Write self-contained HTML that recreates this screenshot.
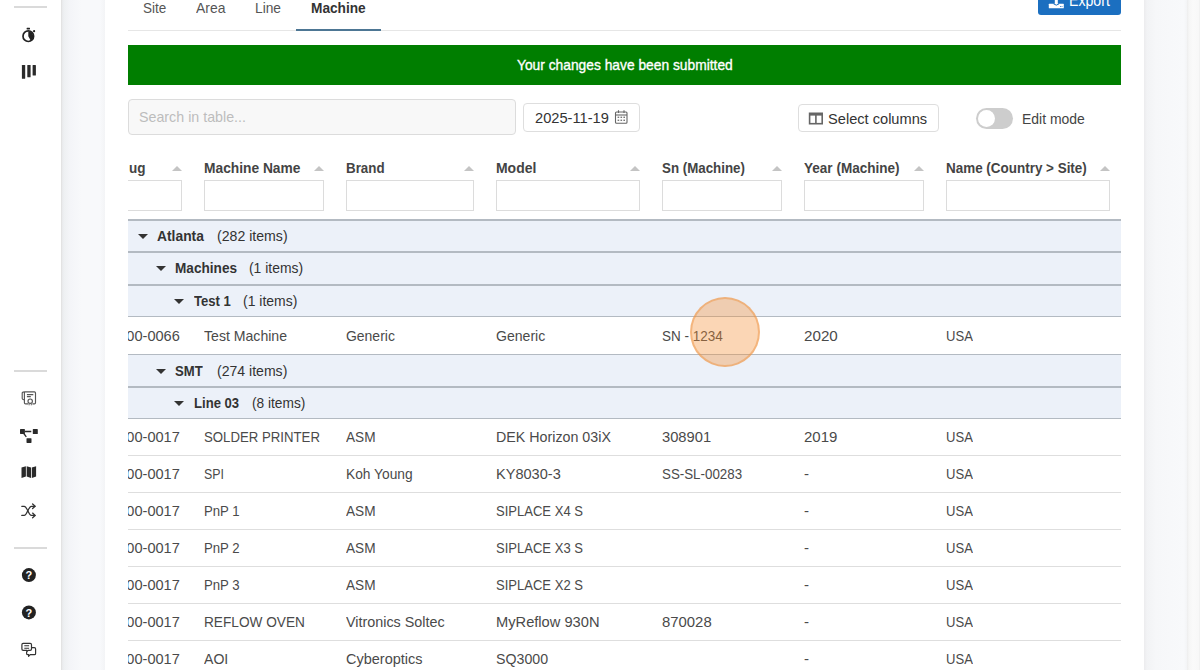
<!DOCTYPE html>
<html><head><meta charset="utf-8">
<style>
*{box-sizing:border-box;margin:0;padding:0}
html,body{-webkit-font-smoothing:antialiased;width:1200px;height:670px;overflow:hidden;background:#fff;font-family:"Liberation Sans",sans-serif;position:relative}
.abs{position:absolute}
#sidebar{left:0;top:0;width:62px;height:670px;background:#fff;border-right:1px solid #e3e3e3}
#gapL{left:62px;top:0;width:43px;height:670px;background:linear-gradient(to right,#e8e9eb 0,#eef0f2 2px,#f4f5f8 8px,#f8f9fb 20px,#f8f9fb 38px,#f3f4f6 43px)}
#card{left:105px;top:0;width:1039px;height:670px;background:#fff}
#gapR{left:1144px;top:0;width:43px;height:670px;background:linear-gradient(to right,#ececee 0,#f2f3f5 3px,#f6f7f9 12px,#f8f9fb 40px,#f3f4f6 43px)}
#edgeR{left:1187px;top:0;width:13px;height:670px;background:linear-gradient(to right,#ededed 0,#f6f6f6 2px,#fafafa 6px,#f8f8f8 12px,#ececec 13px)}
.sep{left:14px;width:33px;height:2px;background:#dadada}
.t{position:absolute;white-space:nowrap;line-height:1;transform-origin:0 0}
.tab{font-size:15px;color:#555;top:0}
.hdr{font-size:14px;font-weight:bold;color:#454545;top:160px}
.tri{position:absolute;top:166px;width:0;height:0;border-left:5px solid transparent;border-right:5px solid transparent;border-bottom:5px solid #c4c4c4}
.fin{position:absolute;top:180px;height:31px;border:1px solid #dcdcdc;background:#fff}
.grp{position:absolute;left:128px;width:993px;background:#ecf1f9}
.gb{position:absolute;left:128px;width:993px;height:2px;background:#b3bac2}
.rb{position:absolute;left:128px;width:993px;height:1px;background:#dedede}
.gt{font-size:14px;color:#333}
.gt b{font-weight:bold}
.ar{position:absolute;width:0;height:0;border-left:5px solid transparent;border-right:5px solid transparent;border-top:5px solid #333}
.d{font-size:14px;color:#4a4a4a}
</style></head><body>
<div id="sidebar" class="abs"></div>
<div id="gapL" class="abs"></div>
<div id="card" class="abs"></div>
<div id="gapR" class="abs"></div>
<div id="edgeR" class="abs"></div>

<!-- sidebar separators -->
<div class="abs sep" style="top:6px"></div>
<div class="abs sep" style="top:370px"></div>
<div class="abs sep" style="top:547px"></div>


<!-- sidebar icons -->
<svg class="abs" style="left:0;top:0" width="61" height="670" viewBox="0 0 61 670">
 <g fill="#222" stroke="none">
  <!-- stopwatch -->
  <rect x="26.6" y="27.8" width="3.4" height="1.6" rx="0.4"/>
  <circle cx="34.1" cy="31.2" r="1.1"/>
  <path d="M28.3 36.2 L28.3 31.4 A4.8 4.8 0 0 1 30.7 40.4 Z"/>
 </g>
 <circle cx="28.3" cy="36.2" r="5.3" fill="none" stroke="#222" stroke-width="1.7"/>
 <!-- bars -->
 <g fill="#2a2a2a">
  <rect x="21.9" y="65" width="3.3" height="13.7" rx="0.5"/>
  <rect x="27.3" y="65" width="3.3" height="12.3" rx="0.5"/>
  <rect x="32.6" y="65" width="3.3" height="10.6" rx="0.5"/>
 </g>
 <!-- certificate -->
 <g fill="none" stroke="#555" stroke-width="1.15" stroke-linejoin="round">
  <path d="M24.4 391.8 H34.4 Q35.5 391.8 35.5 392.9 V402.7 Q35.5 403.9 34.4 403.9 H32.4"/>
  <path d="M28.1 403.9 H25.6 Q24.4 403.9 24.4 402.7 V391.8"/>
  <path d="M24.4 391.8 Q22.2 391.8 22.2 393.2 V398.6 Q22.2 399.8 24.4 399.8"/>
  <circle cx="30.2" cy="401.2" r="2.2"/>
 </g>
 <path d="M26.9 394.6 H33.3 M26.9 396.6 H30.8" stroke="#555" stroke-width="1.1"/>
 <path d="M29.1 403.3 V405.3 M31.3 403.3 V405.3" stroke="#666" stroke-width="1"/>
 <!-- sitemap -->
 <g fill="#2a2a2a">
  <rect x="20" y="429" width="4.9" height="4.9" rx="0.6"/>
  <rect x="32.8" y="429.1" width="5" height="4.9" rx="0.6"/>
  <rect x="26.5" y="438.2" width="5" height="4.7" rx="0.6"/>
 </g>
 <path d="M24.8 431.5 H31.3 M23.8 433.5 L26.3 436.9" stroke="#2a2a2a" stroke-width="1.3"/>
 <!-- map -->
 <g fill="#2a2a2a">
  <path d="M21.5 467.6 L25.9 466.3 V476.6 L21.5 477.9 Z"/>
  <path d="M26.7 466.3 L31 467.6 V477.9 L26.7 476.6 Z"/>
  <path d="M31.8 467.6 L36.1 466.3 V476.6 L31.8 477.9 Z"/>
 </g>
 <!-- shuffle -->
 <g fill="none" stroke="#333" stroke-width="1.3" stroke-linecap="round" stroke-linejoin="round">
  <path d="M21.8 506.3 H24.2 C27.3 506.3 28.3 515.4 31.4 515.4 H35"/>
  <path d="M21.8 515.4 H24.2 C27.3 515.4 28.3 506.3 31.4 506.3 H35"/>
  <path d="M32.6 504 L35.1 506.3 L32.6 508.6"/>
  <path d="M32.6 513.1 L35.1 515.4 L32.6 517.7"/>
 </g>
 <!-- question circles -->
 <g>
  <circle cx="28.9" cy="575.1" r="7" fill="#222"/>
  <text x="28.9" y="579.4" font-family="Liberation Sans" font-weight="bold" font-size="11" fill="#fff" text-anchor="middle">?</text>
  <circle cx="28.9" cy="612.4" r="7" fill="#222"/>
  <text x="28.9" y="616.7" font-family="Liberation Sans" font-weight="bold" font-size="11" fill="#fff" text-anchor="middle">?</text>
 </g>
 <!-- comments -->
 <g fill="none" stroke="#333" stroke-width="1.2" stroke-linejoin="round">
  <path d="M23.1 643.4 H30.2 Q31.5 643.4 31.5 644.7 V649.1 Q31.5 650.4 30.2 650.4 H28.2 L26.9 651.6 V650.4 H23.1 Q21.9 650.4 21.9 649.1 V644.7 Q21.9 643.4 23.1 643.4 Z"/>
  <path d="M31.9 647.6 H34.4 Q35.6 647.6 35.6 648.9 V653.4 Q35.6 654.7 34.4 654.7 H30.2 L28.6 656.3 V654.7 H27.9 Q26.6 654.7 26.6 653.4 V651.4"/>
 </g>
 <path d="M24.3 645.8 H29.1 M24.3 648.3 H29.1" stroke="#333" stroke-width="1.1"/>
</svg>


<div class="t" style="left:142.60px;top:0px;font-size:15px;color:#555;transform:scaleX(0.9000);">Site</div>
<div class="t" style="left:195.80px;top:0px;font-size:15px;color:#555;transform:scaleX(0.9281);">Area</div>
<div class="t" style="left:255.30px;top:0px;font-size:15px;color:#555;transform:scaleX(0.9179);">Line</div>
<div class="t" style="left:311.00px;top:0px;font-size:15px;color:#333;font-weight:bold;transform:scaleX(0.9117);">Machine</div>
<div class="abs" style="left:128px;top:30px;width:993px;height:1px;background:#e6e6e6"></div>
<div class="abs" style="left:296px;top:29px;width:85px;height:2px;background:#4d7694"></div>
<div class="abs" style="left:1038px;top:-10px;width:83px;height:25px;background:#1b6fc0;border-radius:3px"></div>
<div class="t" style="left:1068.50px;top:-7px;font-size:16px;color:#fff;transform:scaleX(0.8830);">Export</div>
<svg class="abs" style="left:1046px;top:0" width="20" height="10" viewBox="0 0 20 10"><g fill="#fff"><rect x="2.8" y="3.8" width="15" height="4.4" rx="0.5"/><rect x="8.8" y="0" width="3" height="5"/></g><path d="M7.5 3.8 Q10.3 6.5 13.1 3.8" stroke="#1b6fc0" stroke-width="1" fill="none"/><circle cx="14.5" cy="6.5" r="0.5" fill="#1b6fc0"/><circle cx="16" cy="6.5" r="0.5" fill="#1b6fc0"/></svg>
<div class="abs" style="left:128px;top:45px;width:993px;height:40px;background:#007e00"></div>
<div class="t" style="left:516.90px;top:57px;font-size:15px;color:#fff;transform:scaleX(0.9196);-webkit-text-stroke:0.35px #fff;">Your changes have been submitted</div>
<div class="abs" style="left:128px;top:99px;width:388px;height:36px;background:#f8f8f8;border:1px solid #dcdcdc;border-radius:4px"></div>
<div class="t" style="left:139.00px;top:109px;font-size:15px;color:#bdbdbd;transform:scaleX(0.9504);">Search in table...</div>
<div class="abs" style="left:523px;top:103px;width:117px;height:29px;background:#fff;border:1px solid #dedede;border-radius:4px"></div>
<div class="t" style="left:535.00px;top:110px;font-size:15px;color:#333;transform:scaleX(0.9763);">2025-11-19</div>
<svg class="abs" style="left:614px;top:109px" width="15" height="16" viewBox="0 0 15 16"><g fill="none" stroke="#666" stroke-width="1.1"><rect x="1.5" y="3" width="11.5" height="11.3" rx="1"/><path d="M1.5 6 H13"/><path d="M4.5 1.2 V4 M10 1.2 V4"/></g><g fill="#777"><rect x="3.6" y="7.6" width="1.6" height="1.4"/><rect x="6.5" y="7.6" width="1.6" height="1.4"/><rect x="9.4" y="7.6" width="1.6" height="1.4"/><rect x="3.6" y="10.6" width="1.6" height="1.4"/><rect x="6.5" y="10.6" width="1.6" height="1.4"/><rect x="9.4" y="10.6" width="1.6" height="1.4"/></g></svg>
<div class="abs" style="left:798px;top:104px;width:141px;height:28px;background:#fff;border:1px solid #dedede;border-radius:4px"></div>
<div class="t" style="left:828.00px;top:110.5px;font-size:15px;color:#333;transform:scaleX(0.9745);">Select columns</div>
<svg class="abs" style="left:808px;top:112px" width="16" height="13" viewBox="0 0 16 13"><rect x="1.6" y="1.3" width="12.6" height="10.4" fill="none" stroke="#666" stroke-width="1.6"/><rect x="1.6" y="1.3" width="12.6" height="2.3" fill="#666"/><path d="M7.9 1.3 V11.7" stroke="#666" stroke-width="1.6"/></svg>
<div class="abs" style="left:976px;top:108px;width:37px;height:21px;background:#cdcdcd;border-radius:11px"></div>
<div class="abs" style="left:978px;top:110px;width:17px;height:17px;background:#fff;border-radius:50%"></div>
<div class="t" style="left:1022.00px;top:110.5px;font-size:15px;color:#444;transform:scaleX(0.9309);">Edit mode</div>
<div class="abs" style="left:128px;top:150px;width:60px;height:70px;overflow:hidden">
<div class="t" style="left:0.50px;top:10px;font-size:15px;color:#444;font-weight:bold;transform:scaleX(0.9000);">ug</div>
<div class="fin" style="left:-30px;top:30px;width:84px"></div>
</div>
<div class="tri" style="left:172px"></div>
<div class="t" style="left:204.00px;top:160px;font-size:15px;color:#444;font-weight:bold;transform:scaleX(0.9181);">Machine Name</div>
<div class="fin" style="left:204px;width:120px"></div>
<div class="tri" style="left:314px"></div>
<div class="t" style="left:346.00px;top:160px;font-size:15px;color:#444;font-weight:bold;transform:scaleX(0.8907);">Brand</div>
<div class="fin" style="left:346px;width:128px"></div>
<div class="tri" style="left:464px"></div>
<div class="t" style="left:496.00px;top:160px;font-size:15px;color:#444;font-weight:bold;transform:scaleX(0.9302);">Model</div>
<div class="fin" style="left:496px;width:144px"></div>
<div class="tri" style="left:630px"></div>
<div class="t" style="left:662.00px;top:160px;font-size:15px;color:#444;font-weight:bold;transform:scaleX(0.8882);">Sn (Machine)</div>
<div class="fin" style="left:662px;width:120px"></div>
<div class="tri" style="left:772px"></div>
<div class="t" style="left:804.00px;top:160px;font-size:15px;color:#444;font-weight:bold;transform:scaleX(0.9028);">Year (Machine)</div>
<div class="fin" style="left:804px;width:120px"></div>
<div class="tri" style="left:914px"></div>
<div class="t" style="left:946.00px;top:160px;font-size:15px;color:#444;font-weight:bold;transform:scaleX(0.8962);">Name (Country &gt; Site)</div>
<div class="fin" style="left:946px;width:164px"></div>
<div class="tri" style="left:1100px"></div>
<div class="grp" style="top:219px;height:33px"></div>
<div class="grp" style="top:251px;height:34px"></div>
<div class="grp" style="top:284px;height:33px"></div>
<div class="grp" style="top:354px;height:33px"></div>
<div class="grp" style="top:386px;height:33px"></div>
<div class="gb" style="top:219px"></div>
<div class="gb" style="top:251px"></div>
<div class="gb" style="top:284px"></div>
<div class="gb" style="top:386px"></div>
<div class="gb" style="top:316px;height:1px"></div>
<div class="gb" style="top:354px;height:1px"></div>
<div class="gb" style="top:418px;height:1px"></div>
<div class="ar" style="left:137.6px;top:234px"></div>
<div class="t" style="left:157.00px;top:228.4px;font-size:15px;color:#333;font-weight:bold;transform:scaleX(0.9231);">Atlanta</div>
<div class="t" style="left:217.40px;top:228.4px;font-size:15px;color:#333;transform:scaleX(0.9413);">(282 items)</div>
<div class="ar" style="left:155.6px;top:266px"></div>
<div class="t" style="left:175.30px;top:260.4px;font-size:15px;color:#333;font-weight:bold;transform:scaleX(0.9074);">Machines</div>
<div class="t" style="left:249.00px;top:260.4px;font-size:15px;color:#333;transform:scaleX(0.9259);">(1 items)</div>
<div class="ar" style="left:173.6px;top:299px"></div>
<div class="t" style="left:193.60px;top:293.4px;font-size:15px;color:#333;font-weight:bold;transform:scaleX(0.8738);">Test 1</div>
<div class="t" style="left:242.70px;top:293.4px;font-size:15px;color:#333;transform:scaleX(0.9310);">(1 items)</div>
<div class="ar" style="left:155.6px;top:369px"></div>
<div class="t" style="left:175.30px;top:363.4px;font-size:15px;color:#333;font-weight:bold;transform:scaleX(0.8750);">SMT</div>
<div class="t" style="left:216.80px;top:363.4px;font-size:15px;color:#333;transform:scaleX(0.9373);">(274 items)</div>
<div class="ar" style="left:173.6px;top:401px"></div>
<div class="t" style="left:193.60px;top:395.4px;font-size:15px;color:#333;font-weight:bold;transform:scaleX(0.8731);">Line 03</div>
<div class="t" style="left:252.00px;top:395.4px;font-size:15px;color:#333;transform:scaleX(0.9138);">(8 items)</div>
<div class="abs" style="left:128px;top:321px;width:60px;height:24px;overflow:hidden">
<div class="t" style="left:-42.63px;top:7px;font-size:15px;color:#4a4a4a;transform:scaleX(0.9717);">M-00000-0066</div>
</div>
<div class="t" style="left:204.00px;top:328px;font-size:15px;color:#4a4a4a;transform:scaleX(0.9398);">Test Machine</div>
<div class="t" style="left:346.00px;top:328px;font-size:15px;color:#4a4a4a;transform:scaleX(0.9302);">Generic</div>
<div class="t" style="left:496.00px;top:328px;font-size:15px;color:#4a4a4a;transform:scaleX(0.9377);">Generic</div>
<div class="t" style="left:662.00px;top:328px;font-size:15px;color:#4a4a4a;transform:scaleX(0.9000);">SN - 1234</div>
<div class="t" style="left:804.00px;top:328px;font-size:15px;color:#4a4a4a;transform:scaleX(1.0121);">2020</div>
<div class="t" style="left:946.00px;top:328px;font-size:15px;color:#4a4a4a;transform:scaleX(0.8710);">USA</div>
<div class="rb" style="top:455px"></div>
<div class="abs" style="left:128px;top:422px;width:60px;height:24px;overflow:hidden">
<div class="t" style="left:-42.63px;top:6.600000000000023px;font-size:15px;color:#4a4a4a;transform:scaleX(0.9717);">M-00000-0017</div>
</div>
<div class="t" style="left:204.00px;top:428.6px;font-size:15px;color:#4a4a4a;transform:scaleX(0.8803);">SOLDER PRINTER</div>
<div class="t" style="left:346.00px;top:428.6px;font-size:15px;color:#4a4a4a;transform:scaleX(0.9091);">ASM</div>
<div class="t" style="left:496.00px;top:428.6px;font-size:15px;color:#4a4a4a;transform:scaleX(0.9504);">DEK Horizon 03iX</div>
<div class="t" style="left:662.00px;top:428.6px;font-size:15px;color:#4a4a4a;transform:scaleX(0.9800);">308901</div>
<div class="t" style="left:804.00px;top:428.6px;font-size:15px;color:#4a4a4a;">2019</div>
<div class="t" style="left:946.00px;top:428.6px;font-size:15px;color:#4a4a4a;transform:scaleX(0.8710);">USA</div>
<div class="rb" style="top:492px"></div>
<div class="abs" style="left:128px;top:459px;width:60px;height:24px;overflow:hidden">
<div class="t" style="left:-42.63px;top:6.600000000000023px;font-size:15px;color:#4a4a4a;transform:scaleX(0.9717);">M-00000-0017</div>
</div>
<div class="t" style="left:204.00px;top:465.6px;font-size:15px;color:#4a4a4a;transform:scaleX(0.8250);">SPI</div>
<div class="t" style="left:346.00px;top:465.6px;font-size:15px;color:#4a4a4a;transform:scaleX(0.9178);">Koh Young</div>
<div class="t" style="left:496.00px;top:465.6px;font-size:15px;color:#4a4a4a;transform:scaleX(0.9701);">KY8030-3</div>
<div class="t" style="left:662.00px;top:465.6px;font-size:15px;color:#4a4a4a;transform:scaleX(0.8889);">SS-SL-00283</div>
<div class="t" style="left:804.00px;top:465.6px;font-size:15px;color:#4a4a4a;">-</div>
<div class="t" style="left:946.00px;top:465.6px;font-size:15px;color:#4a4a4a;transform:scaleX(0.8710);">USA</div>
<div class="rb" style="top:529px"></div>
<div class="abs" style="left:128px;top:496px;width:60px;height:24px;overflow:hidden">
<div class="t" style="left:-42.63px;top:6.600000000000023px;font-size:15px;color:#4a4a4a;transform:scaleX(0.9717);">M-00000-0017</div>
</div>
<div class="t" style="left:204.00px;top:502.6px;font-size:15px;color:#4a4a4a;transform:scaleX(0.8780);">PnP 1</div>
<div class="t" style="left:346.00px;top:502.6px;font-size:15px;color:#4a4a4a;transform:scaleX(0.9091);">ASM</div>
<div class="t" style="left:496.00px;top:502.6px;font-size:15px;color:#4a4a4a;transform:scaleX(0.8690);">SIPLACE X4 S</div>
<div class="t" style="left:804.00px;top:502.6px;font-size:15px;color:#4a4a4a;">-</div>
<div class="t" style="left:946.00px;top:502.6px;font-size:15px;color:#4a4a4a;transform:scaleX(0.8710);">USA</div>
<div class="rb" style="top:566px"></div>
<div class="abs" style="left:128px;top:533px;width:60px;height:24px;overflow:hidden">
<div class="t" style="left:-42.63px;top:6.600000000000023px;font-size:15px;color:#4a4a4a;transform:scaleX(0.9717);">M-00000-0017</div>
</div>
<div class="t" style="left:204.00px;top:539.6px;font-size:15px;color:#4a4a4a;transform:scaleX(0.8780);">PnP 2</div>
<div class="t" style="left:346.00px;top:539.6px;font-size:15px;color:#4a4a4a;transform:scaleX(0.9091);">ASM</div>
<div class="t" style="left:496.00px;top:539.6px;font-size:15px;color:#4a4a4a;transform:scaleX(0.8690);">SIPLACE X3 S</div>
<div class="t" style="left:804.00px;top:539.6px;font-size:15px;color:#4a4a4a;">-</div>
<div class="t" style="left:946.00px;top:539.6px;font-size:15px;color:#4a4a4a;transform:scaleX(0.8710);">USA</div>
<div class="rb" style="top:603px"></div>
<div class="abs" style="left:128px;top:570px;width:60px;height:24px;overflow:hidden">
<div class="t" style="left:-42.63px;top:6.600000000000023px;font-size:15px;color:#4a4a4a;transform:scaleX(0.9717);">M-00000-0017</div>
</div>
<div class="t" style="left:204.00px;top:576.6px;font-size:15px;color:#4a4a4a;transform:scaleX(0.8780);">PnP 3</div>
<div class="t" style="left:346.00px;top:576.6px;font-size:15px;color:#4a4a4a;transform:scaleX(0.9091);">ASM</div>
<div class="t" style="left:496.00px;top:576.6px;font-size:15px;color:#4a4a4a;transform:scaleX(0.8690);">SIPLACE X2 S</div>
<div class="t" style="left:804.00px;top:576.6px;font-size:15px;color:#4a4a4a;">-</div>
<div class="t" style="left:946.00px;top:576.6px;font-size:15px;color:#4a4a4a;transform:scaleX(0.8710);">USA</div>
<div class="rb" style="top:640px"></div>
<div class="abs" style="left:128px;top:607px;width:60px;height:24px;overflow:hidden">
<div class="t" style="left:-42.63px;top:6.600000000000023px;font-size:15px;color:#4a4a4a;transform:scaleX(0.9717);">M-00000-0017</div>
</div>
<div class="t" style="left:204.00px;top:613.6px;font-size:15px;color:#4a4a4a;transform:scaleX(0.9099);">REFLOW OVEN</div>
<div class="t" style="left:346.00px;top:613.6px;font-size:15px;color:#4a4a4a;transform:scaleX(0.9567);">Vitronics Soltec</div>
<div class="t" style="left:496.00px;top:613.6px;font-size:15px;color:#4a4a4a;transform:scaleX(0.9774);">MyReflow 930N</div>
<div class="t" style="left:662.00px;top:613.6px;font-size:15px;color:#4a4a4a;transform:scaleX(0.9920);">870028</div>
<div class="t" style="left:804.00px;top:613.6px;font-size:15px;color:#4a4a4a;">-</div>
<div class="t" style="left:946.00px;top:613.6px;font-size:15px;color:#4a4a4a;transform:scaleX(0.8710);">USA</div>
<div class="rb" style="top:677px"></div>
<div class="abs" style="left:128px;top:644px;width:60px;height:24px;overflow:hidden">
<div class="t" style="left:-42.63px;top:6.600000000000023px;font-size:15px;color:#4a4a4a;transform:scaleX(0.9717);">M-00000-0017</div>
</div>
<div class="t" style="left:204.00px;top:650.6px;font-size:15px;color:#4a4a4a;transform:scaleX(0.9385);">AOI</div>
<div class="t" style="left:346.00px;top:650.6px;font-size:15px;color:#4a4a4a;transform:scaleX(0.9671);">Cyberoptics</div>
<div class="t" style="left:496.00px;top:650.6px;font-size:15px;color:#4a4a4a;transform:scaleX(0.9455);">SQ3000</div>
<div class="t" style="left:804.00px;top:650.6px;font-size:15px;color:#4a4a4a;">-</div>
<div class="t" style="left:946.00px;top:650.6px;font-size:15px;color:#4a4a4a;transform:scaleX(0.8710);">USA</div>
<div class="abs" style="left:690px;top:297px;width:70px;height:70px;border-radius:50%;background:rgba(245,140,50,0.36);border:2px solid rgba(238,150,70,0.5)"></div>
</body></html>
